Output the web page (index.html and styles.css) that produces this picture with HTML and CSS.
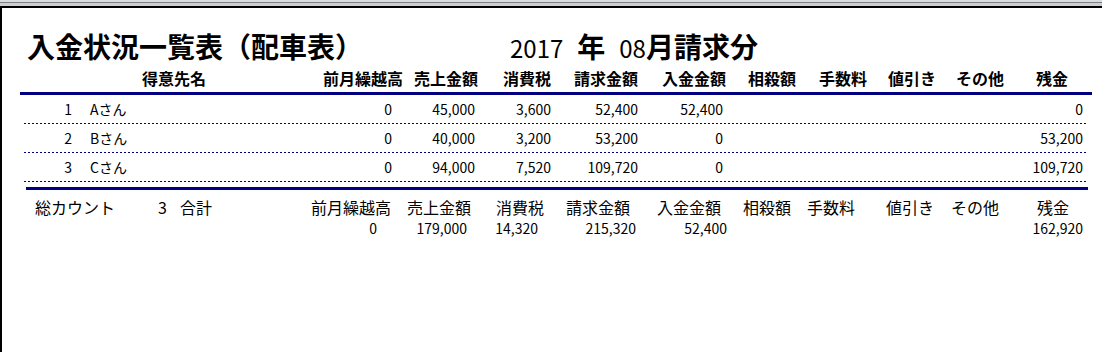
FILE: index.html
```html
<!DOCTYPE html>
<html lang="ja">
<head>
<meta charset="utf-8">
<title>入金状況一覧表（配車表）</title>
<link rel="stylesheet" href="styles.css">
</head>
<body>
<div class="frame-top"></div>
<div class="page">
  <div class="title-row">
    <h1 class="title">入金状況一覧表（配車表）</h1>
    <div class="period"><span class="num">2017</span><span class="kj">年</span><span class="kj"><span class="num">08</span>月請求分</span></div>
  </div>

  <div class="head-row">
    <span>得意先名</span><span>前月繰越高</span><span>売上金額</span><span>消費税</span><span>請求金額</span><span>入金金額</span><span>相殺額</span><span>手数料</span><span>値引き</span><span>その他</span><span>残金</span>
  </div>
  <div class="rule-top"></div>

  <div class="row">
    <span class="no">1</span><span class="name">Aさん</span><span class="r">0</span><span class="r">45,000</span><span class="r">3,600</span><span class="r">52,400</span><span class="r">52,400</span><span></span><span class="r">0</span>
  </div>
  <div class="row">
    <span class="no">2</span><span class="name">Bさん</span><span class="r">0</span><span class="r">40,000</span><span class="r">3,200</span><span class="r">53,200</span><span class="r">0</span><span></span><span class="r">53,200</span>
  </div>
  <div class="row">
    <span class="no">3</span><span class="name">Cさん</span><span class="r">0</span><span class="r">94,000</span><span class="r">7,520</span><span class="r">109,720</span><span class="r">0</span><span></span><span class="r">109,720</span>
  </div>
  <div class="rule-sum"></div>

  <div class="sum-head">
    <span>総カウント</span><span>3</span><span>合計</span><span>前月繰越高</span><span>売上金額</span><span>消費税</span><span>請求金額</span><span>入金金額</span><span>相殺額</span><span>手数料</span><span>値引き</span><span>その他</span><span>残金</span>
  </div>
  <div class="sum-vals">
    <span class="r">0</span><span class="r">179,000</span><span class="r">14,320</span><span class="r">215,320</span><span class="r">52,400</span><span></span><span class="r">162,920</span>
  </div>
</div>
</body>
</html>
```

FILE: styles.css
```css
html, body {
  margin: 0;
  padding: 0;
  background: #ffffff;
}
body {
  width: 1102px;
  height: 352px;
  overflow: hidden;
  font-family: "Noto Sans CJK JP", "Noto Sans", sans-serif;
  color: #000;
}
.frame-top {
  height: 8px;
  background: linear-gradient(to bottom,
    #d9dbdd 0, #d9dbdd 2px,
    #7c7f82 2px, #7c7f82 3px,
    #c9cfd5 3px, #c9cfd5 6px,
    #000 6px, #000 8px);
}
.page {
  border-left: 2px solid #000;
  height: 344px;
  box-sizing: border-box;
}
.title-row {
  display: flex;
  align-items: baseline;
  padding: 20px 0 0 25px;
  height: 30px;
}
.title {
  margin: 0;
  font-size: 28px;
  line-height: 36px;
  font-weight: 700;
  width: 483px;
}
.period {
  display: flex;
  align-items: baseline;
  font-size: 28px;
  line-height: 36px;
  font-weight: 700;
  gap: 14px;
}
.period .num {
  font-weight: 400;
  font-size: 24px;
}
.head-row {
  display: grid;
  grid-template-columns: 181px 91px 89px 71px 88px 86px 71px 69px 68px 80px auto;
  padding-left: 140px;
  margin-top: 8px;
  height: 24px;
  line-height: 24px;
  font-size: 16px;
  font-weight: 700;
}
.rule-top {
  margin: 2px 10px 0 18px;
  height: 3px;
  background: #000080;
}
.row {
  display: grid;
  grid-template-columns: 48px 240px 80px 83px 76px 87px 85px 1fr 100px;
  margin: 0 15px 0 22px;
  padding-right: 4px;
  height: 29px;
  padding-bottom: 1px;
  box-sizing: border-box;
  line-height: 28px;
  font-size: 14px;
  background-image: linear-gradient(to right, #000080 2px, transparent 2px);
  background-size: 4px 1px;
  background-repeat: repeat-x;
  background-position: 0 100%;
}
.row .no {
  text-align: right;
}
.row .name {
  padding-left: 18px;
}
.r {
  text-align: right;
}
.rule-sum {
  margin: 5px 14px 0 24px;
  height: 3px;
  background: #000080;
}
.sum-head {
  display: grid;
  grid-template-columns: 123px 22px 131px 96px 89px 70px 91px 86px 64px 79px 65px 86px auto;
  padding-left: 33px;
  margin-top: 8px;
  height: 18px;
  line-height: 18px;
  font-size: 16px;
}
.sum-vals {
  display: grid;
  grid-template-columns: 77px 90px 71px 98px 91px 1fr 100px;
  padding-left: 298px;
  padding-right: 19px;
  margin-top: 3px;
  height: 18px;
  line-height: 18px;
  font-size: 14px;
}
```
